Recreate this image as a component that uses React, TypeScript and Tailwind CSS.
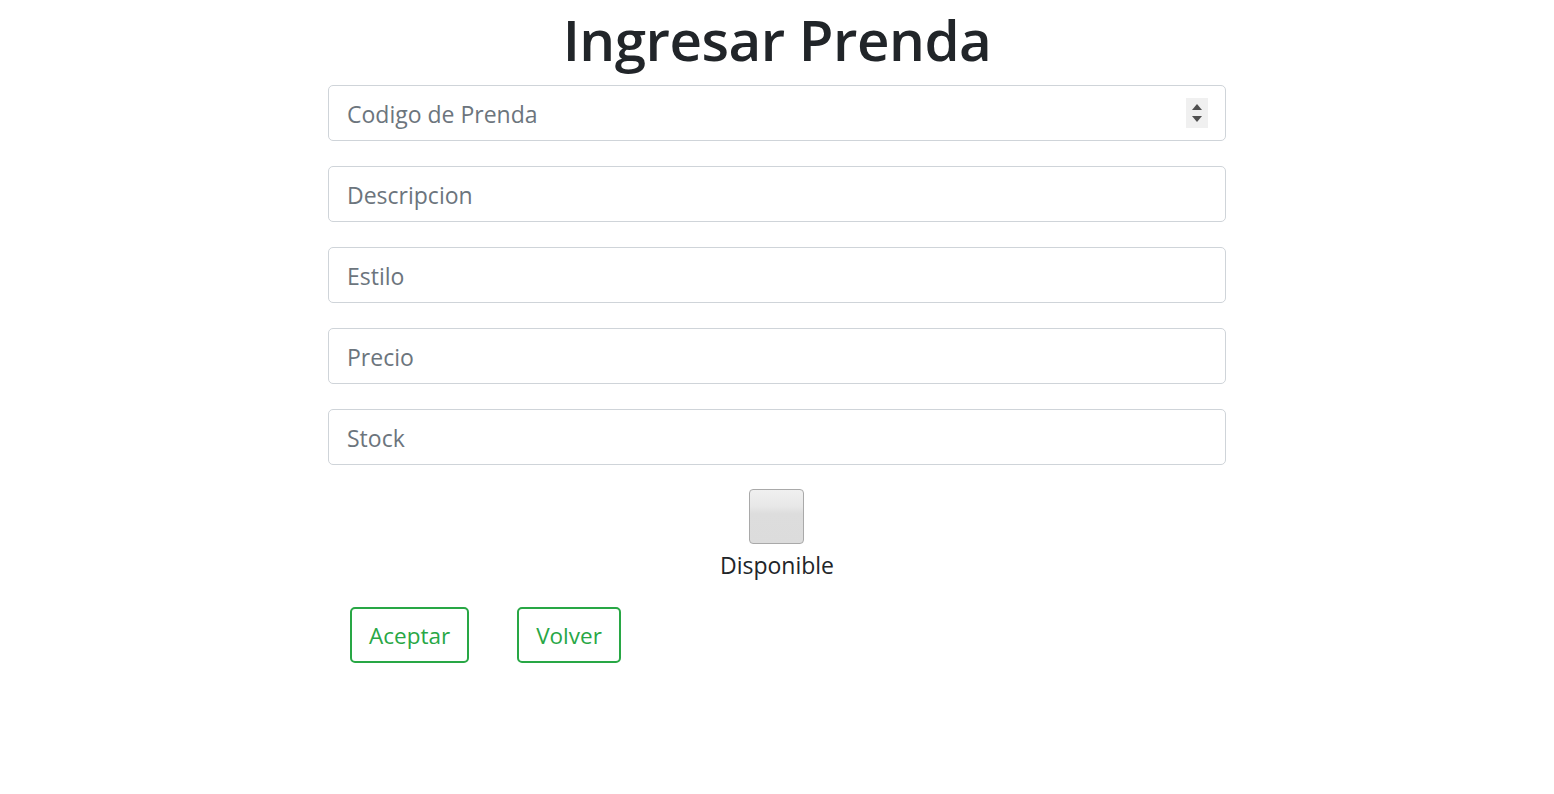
import React from "react";

const inputCls =
  "block w-full h-[56px] px-[18px] pt-[2px] text-[23px] text-[#495057] placeholder:text-[#6c757d] bg-white border-[1.5px] border-[#cfd4d9] rounded-[5px] outline-none";

const btnCls =
  "h-[56px] px-[17px] pt-[1px] border-2 border-[#28a745] rounded-[5px] text-[22.5px] text-[#28a745] bg-white";

export default function App() {
  return (
    <div className="min-h-screen bg-white font-['Open_Sans',sans-serif] text-[#212529]">
      <div className="mx-auto w-[898px] flex flex-col">
        <h1 className="text-center text-[56.5px] leading-[72px] font-semibold mt-[4px] mb-[9px] tracking-[-0.5px]">
          Ingresar Prenda
        </h1>
        <div className="flex flex-col gap-[25px]">
          <div className="relative">
            <input className={inputCls} placeholder="Codigo de Prenda" />
            <div className="absolute right-[18px] top-[13px] w-[22px] h-[30px] bg-[#f0f0f0] flex flex-col items-center justify-center gap-[6px]">
              <svg width="10" height="6" viewBox="0 0 10 6"><path d="M0 6 L5 0 L10 6 Z" fill="#505050" /></svg>
              <svg width="10" height="6" viewBox="0 0 10 6"><path d="M0 0 L5 6 L10 0 Z" fill="#505050" /></svg>
            </div>
          </div>
          <input className={inputCls} placeholder="Descripcion" />
          <input className={inputCls} placeholder="Estilo" />
          <input className={inputCls} placeholder="Precio" />
          <input className={inputCls} placeholder="Stock" />
        </div>
        <div className="flex flex-col items-center mt-[24px]">
          <div className="w-[55px] h-[55px] -translate-x-[1px] rounded-[4px] border-[1.5px] border-[#a9a9a9] bg-[linear-gradient(to_bottom,#f0f0f0_0%,#e8e8e8_30%,#dddddd_45%,#dcdcdc_100%)]" />
          <span className="text-[23px] leading-[30px] mt-[6px]">Disponible</span>
        </div>
        <div className="flex gap-[48px] pl-[22px] mt-[27px]">
          <button className={btnCls}>Aceptar</button>
          <button className={btnCls}>Volver</button>
        </div>
      </div>
    </div>
  );
}
